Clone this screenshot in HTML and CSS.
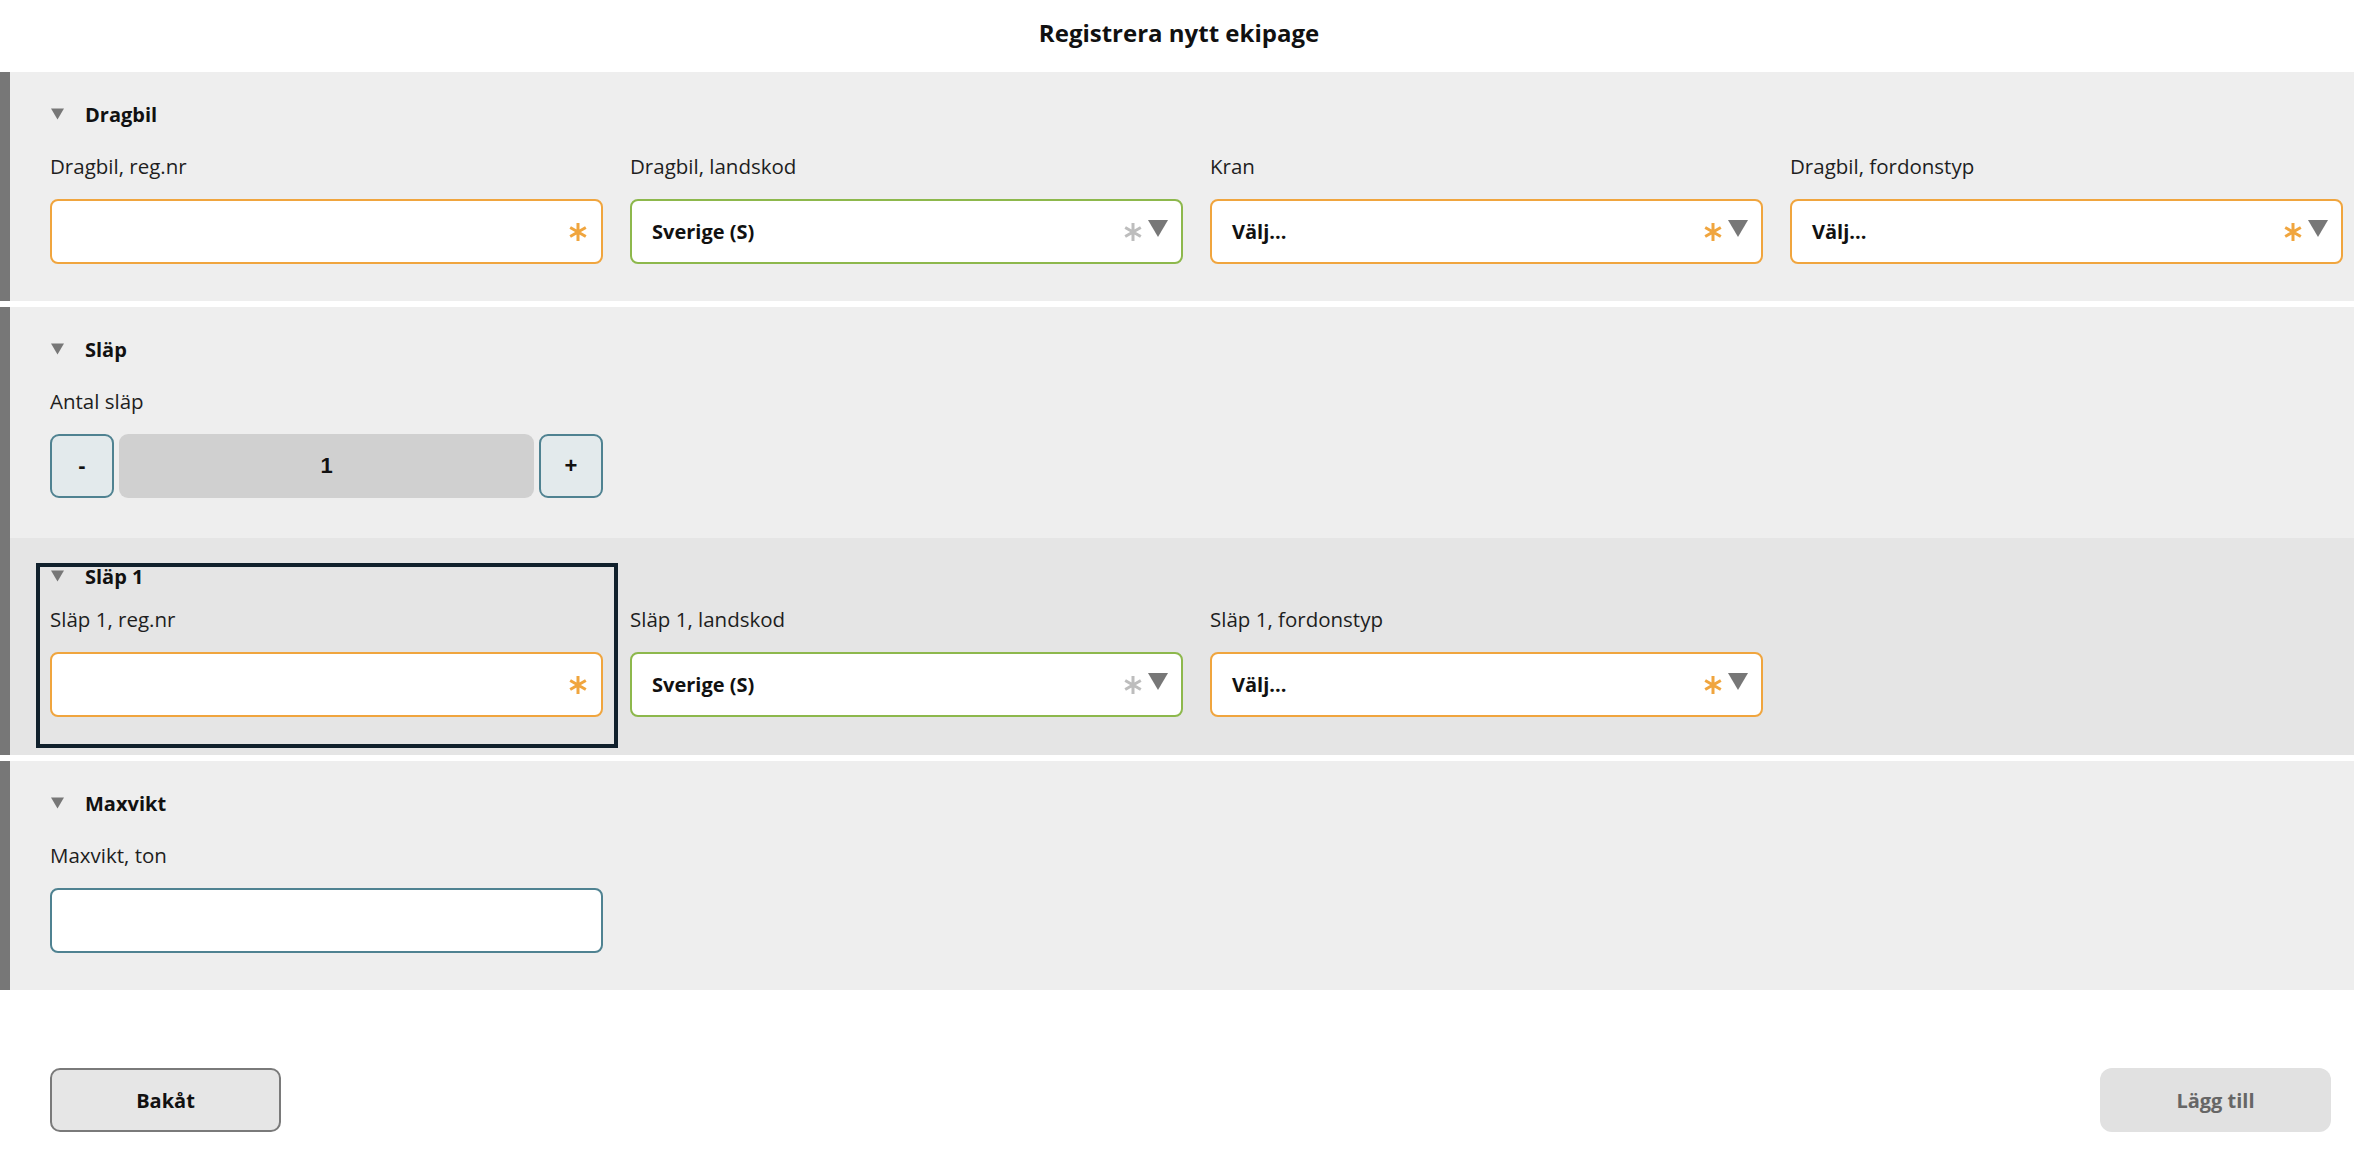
FILE: index.html
```html
<!DOCTYPE html>
<html lang="sv">
<head>
    <meta charset="UTF-8">
    <meta name="viewport" content="width=device-width, initial-scale=1.0">
    <title>Registrera nytt ekipage</title>
    <link rel="stylesheet" href="styles.css">
</head>
<body>

<h1 class="title">Registrera nytt ekipage</h1>

<div class="panel">
    <div class="section">
        <div class="section-head">
            <svg class="caret" viewBox="0 0 14 12"><polygon points="0,0 14,0 7,12"/></svg>
            <span>Dragbil</span>
        </div>
        <div class="fields">
            <div class="field">
                <label>Dragbil, reg.nr</label>
                <div class="control required">
                    <input class="text" type="text">
                    <svg class="star" viewBox="0 0 20 20"><path d="M10 1V19M2.2 5.5L17.8 14.5M2.2 14.5L17.8 5.5"/></svg>
                </div>
            </div>
            <div class="field">
                <label>Dragbil, landskod</label>
                <div class="control valid">
                    <span class="value">Sverige (S)</span>
                    <svg class="star muted" viewBox="0 0 20 20"><path d="M10 1V19M2.2 5.5L17.8 14.5M2.2 14.5L17.8 5.5"/></svg>
                    <svg class="arrow" viewBox="0 0 20 17"><polygon points="0,0 20,0 10,17"/></svg>
                </div>
            </div>
            <div class="field">
                <label>Kran</label>
                <div class="control required">
                    <span class="value">Välj...</span>
                    <svg class="star" viewBox="0 0 20 20"><path d="M10 1V19M2.2 5.5L17.8 14.5M2.2 14.5L17.8 5.5"/></svg>
                    <svg class="arrow" viewBox="0 0 20 17"><polygon points="0,0 20,0 10,17"/></svg>
                </div>
            </div>
            <div class="field">
                <label>Dragbil, fordonstyp</label>
                <div class="control required">
                    <span class="value">Välj...</span>
                    <svg class="star" viewBox="0 0 20 20"><path d="M10 1V19M2.2 5.5L17.8 14.5M2.2 14.5L17.8 5.5"/></svg>
                    <svg class="arrow" viewBox="0 0 20 17"><polygon points="0,0 20,0 10,17"/></svg>
                </div>
            </div>
        </div>
    </div>
</div>

<div class="panel">
    <div class="section count-section">
        <div class="section-head">
            <svg class="caret" viewBox="0 0 14 12"><polygon points="0,0 14,0 7,12"/></svg>
            <span>Släp</span>
        </div>
        <div class="field">
            <label>Antal släp</label>
            <div class="stepper">
                <button class="step">-</button>
                <div class="count">1</div>
                <button class="step">+</button>
            </div>
        </div>
    </div>
    <div class="section sub">
        <div class="focus-ring"></div>
        <div class="section-head">
            <svg class="caret" viewBox="0 0 14 12"><polygon points="0,0 14,0 7,12"/></svg>
            <span>Släp 1</span>
        </div>
        <div class="fields">
            <div class="field">
                <label>Släp 1, reg.nr</label>
                <div class="control required">
                    <input class="text" type="text">
                    <svg class="star" viewBox="0 0 20 20"><path d="M10 1V19M2.2 5.5L17.8 14.5M2.2 14.5L17.8 5.5"/></svg>
                </div>
            </div>
            <div class="field">
                <label>Släp 1, landskod</label>
                <div class="control valid">
                    <span class="value">Sverige (S)</span>
                    <svg class="star muted" viewBox="0 0 20 20"><path d="M10 1V19M2.2 5.5L17.8 14.5M2.2 14.5L17.8 5.5"/></svg>
                    <svg class="arrow" viewBox="0 0 20 17"><polygon points="0,0 20,0 10,17"/></svg>
                </div>
            </div>
            <div class="field">
                <label>Släp 1, fordonstyp</label>
                <div class="control required">
                    <span class="value">Välj...</span>
                    <svg class="star" viewBox="0 0 20 20"><path d="M10 1V19M2.2 5.5L17.8 14.5M2.2 14.5L17.8 5.5"/></svg>
                    <svg class="arrow" viewBox="0 0 20 17"><polygon points="0,0 20,0 10,17"/></svg>
                </div>
            </div>
        </div>
    </div>
</div>

<div class="panel">
    <div class="section">
        <div class="section-head">
            <svg class="caret" viewBox="0 0 14 12"><polygon points="0,0 14,0 7,12"/></svg>
            <span>Maxvikt</span>
        </div>
        <div class="field">
            <label>Maxvikt, ton</label>
            <div class="control plain">
                <input class="text" type="text">
            </div>
        </div>
    </div>
</div>

<div class="footer">
    <button class="btn back">Bakåt</button>
    <button class="btn add" disabled>Lägg till</button>
</div>

</body>
</html>
```

FILE: styles.css
```css
body {
    margin: 0;
    font-family: 'Open Sans', 'Liberation Sans', sans-serif;
    color: #1a1a1a;
    background-color: #fff;
}

.title {
    margin: 0;
    padding: 17px 0 23px;
    font-size: 24px;
    line-height: 32px;
    font-weight: 700;
    text-align: center;
    color: #111;
}

.panel {
    margin: 0 4px 6px 0;
    border-left: 10px solid #777;
    background-color: #eeeeee;
}

.section {
    padding: 28px 0 37px 40px;
}

.section.count-section {
    padding-bottom: 40px;
}

.section.sub {
    position: relative;
    padding: 24px 0 38px 40px;
    background-color: #e5e5e5;
}

.section-head {
    display: flex;
    align-items: center;
    height: 28px;
    font-size: 20px;
    font-weight: 700;
    color: #111;
}

.caret {
    width: 13px;
    height: 12px;
    margin: 0 21px 0 1px;
    fill: #777;
}

.fields {
    display: grid;
    grid-template-columns: repeat(4, 553px);
    column-gap: 27px;
}

.field {
    margin-top: 24px;
}

.sub .field {
    margin-top: 15px;
}

.field label {
    display: block;
    height: 28px;
    line-height: 28px;
    margin-bottom: 19px;
    font-size: 20.5px;
    color: #1e1e1e;
}

.control {
    display: flex;
    align-items: center;
    box-sizing: border-box;
    width: 553px;
    height: 65px;
    padding: 0 13px 0 20px;
    background-color: #fff;
    border: 2px solid #f0a53e;
    border-radius: 8px;
}

.control.valid {
    border-color: #8db84c;
}

.control.plain {
    border-color: #4f8291;
}

.text {
    flex: 1;
    min-width: 0;
    height: 100%;
    padding: 0;
    border: none;
    outline: none;
    background: transparent;
    font: inherit;
}

.value {
    flex: 1;
    font-size: 20px;
    font-weight: 700;
    color: #111;
}

.star {
    width: 20px;
    height: 20px;
    stroke: #f0a53e;
    stroke-width: 3;
    fill: none;
}

.star.muted {
    stroke: #bdbdbd;
}

.arrow {
    width: 20px;
    height: 17px;
    margin-left: 5px;
    margin-top: -6px;
    fill: #777;
}

.stepper {
    display: flex;
    gap: 5px;
    width: 553px;
    height: 64px;
}

.step {
    width: 64px;
    background-color: #e3eaec;
    border: 2px solid #4f8291;
    border-radius: 9px;
    font-family: 'Liberation Sans', Arial, sans-serif;
    font-size: 22px;
    font-weight: 700;
    color: #111;
}

.count {
    flex: 1;
    display: flex;
    align-items: center;
    justify-content: center;
    background-color: #d0d0d0;
    border-radius: 9px;
    font-family: 'Liberation Sans', Arial, sans-serif;
    font-size: 22px;
    font-weight: 700;
    color: #111;
}

.focus-ring {
    position: absolute;
    left: 26px;
    top: 25px;
    width: 582px;
    height: 185px;
    box-sizing: border-box;
    border: 4px solid #10202c;
    pointer-events: none;
}

.footer {
    display: flex;
    justify-content: space-between;
    padding: 72px 27px 0 50px;
}

.btn {
    width: 231px;
    height: 64px;
    font-family: 'Open Sans', 'Liberation Sans', sans-serif;
    font-size: 20px;
    font-weight: 700;
    border-radius: 10px;
}

.btn.back {
    background-color: #e6e6e6;
    border: 2px solid #7a7a7a;
    color: #111;
}

.btn.add {
    background-color: #e1e1e1;
    border: none;
    border-radius: 12px;
    color: #666;
}
```
